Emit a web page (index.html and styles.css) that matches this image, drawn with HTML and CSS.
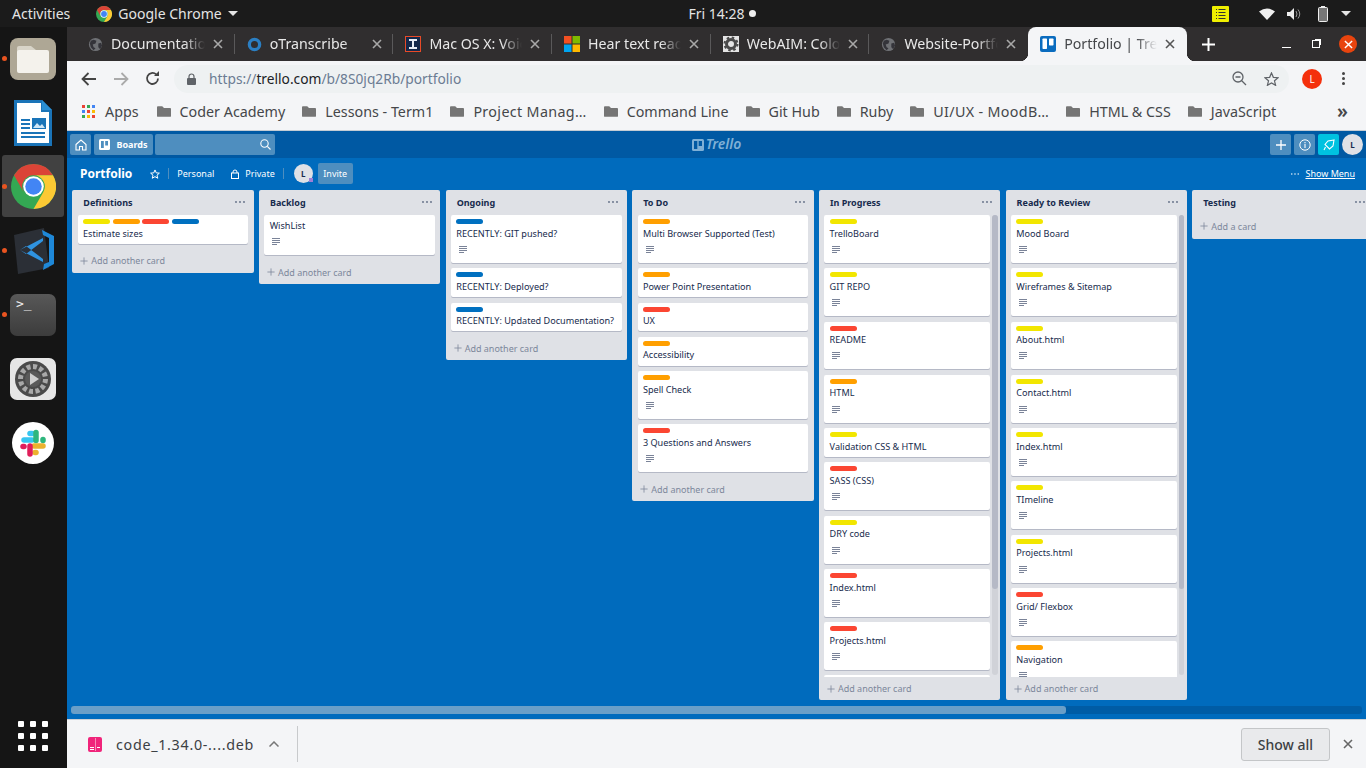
FILE: index.html
```html
<!DOCTYPE html>
<html lang="en">
<head>
  <meta charset="UTF-8" />
  <title>Portfolio | Trello</title>
  <link rel="stylesheet" href="styles.css">
</head>
<body>
  <svg class="sprites" width="0" height="0">
    <symbol id="globe" viewBox="0 0 16 16">
      <circle cx="8" cy="8" r="7" fill="#6f7175"/>
      <path d="M3 4l3-1 3 1-1 3-3 1 1 3 2 1-2 2-3-3-1-4zM11 7l3-1 1 3-2 4-2-2z" fill="#34343a"/>
    </symbol>
    <symbol id="x" viewBox="0 0 10 10">
      <path d="M1 1l8 8M9 1l-8 8" stroke="currentColor" stroke-width="1.6" fill="none"/>
    </symbol>
    <symbol id="folder" viewBox="0 0 16 14">
      <path d="M1 1h5l2 2h7a1 1 0 0 1 1 1v8a1 1 0 0 1-1 1H1a1 1 0 0 1-1-1V2a1 1 0 0 1 1-1z" fill="#757575"/>
    </symbol>
    <symbol id="desc" viewBox="0 0 8 7">
      <path d="M0 .5h8M0 2.500h8M0 4.500h8M0 6.500h5" stroke="#7a8398" stroke-width="1" fill="none"/>
    </symbol>
    <symbol id="dots" viewBox="0 0 10 2">
      <circle cx="1" cy="1" r=".9"/><circle cx="5" cy="1" r=".9"/><circle cx="9" cy="1" r=".9"/>
    </symbol>
    <symbol id="plus" viewBox="0 0 10 10">
      <path d="M5 .5v9M.5 5h9" stroke="currentColor" stroke-width="1" fill="none"/>
    </symbol>
    <symbol id="chrome" viewBox="0 0 48 48">
      <circle cx="24" cy="24" r="24" fill="#34a853"/>
      <path d="M24 0A24 24 0 0 1 44.800 12H24A12 12 0 0 0 13.600 30L3.200 12A24 24 0 0 1 24 0z" fill="#db4437"/>
      <path d="M44.800 12A24 24 0 0 1 24 48L34.400 30A12 12 0 0 0 24 12z" fill="#fcc934"/>
      <circle cx="24" cy="24" r="11" fill="#fff"/>
      <circle cx="24" cy="24" r="8.800" fill="#4285f4"/>
    </symbol>
  </svg>

  <header class="topbar">
    <div class="topbar-left">
      <span>Activities</span>
      <span class="app-menu">
        <svg class="app-chrome" width="16" height="16"><use href="#chrome"/></svg>
        Google Chrome
        <i class="caret"></i>
      </span>
    </div>
    <div class="clock">Fri 14:28 <i class="clock-dot"></i></div>
    <div class="tray">
      <svg class="tray-note" width="17" height="16" viewBox="0 0 17 16">
        <rect width="17" height="16" rx="1" fill="#f0f000"/>
        <path d="M4 3.500h1M6.500 3.500h7M4 6.500h1M6.500 6.500h7M4 9.500h1M6.500 9.500h7M4 12.500h1M6.500 12.500h7" stroke="#333" stroke-width="1"/>
      </svg>
      <svg class="tray-wifi" width="16" height="12" viewBox="0 0 16 12"><path d="M0 3.500Q8-2.500 16 3.500L8 12z" fill="#eee"/></svg>
      <svg class="tray-vol" width="15" height="12" viewBox="0 0 15 12">
        <path d="M0 4h3l4-4v12L3 8H0z" fill="#eee"/>
        <path d="M9 3q2 3 0 6M11 1.500q3.500 4.500 0 9" stroke="#999" fill="none"/>
      </svg>
      <svg class="tray-batt" width="10" height="16" viewBox="0 0 10 16">
        <path d="M3 0h4v1.500H3z" fill="#eee"/>
        <rect x=".5" y="1.500" width="9" height="14" rx="1" fill="#777" stroke="#eee"/>
      </svg>
      <i class="caret"></i>
    </div>
  </header>

  <div class="desktop">
    <nav class="dock">
      <div class="dock-item running">
        <svg width="46" height="42" viewBox="0 0 46 42">
          <rect width="46" height="42" rx="8" fill="#aea795"/>
          <path d="M7 10a2 2 0 0 1 2-2h12l5 4v6H7z" fill="#d8d4c8"/>
          <rect x="7" y="12" width="32" height="23" rx="2" fill="#f4f2ec"/>
        </svg>
      </div>
      <div class="dock-item">
        <svg width="40" height="50" viewBox="0 0 40 50">
          <path d="M1 2h28l10 10v36H1z" fill="#1a74b8"/>
          <path d="M4 5h24v9h8v31H4z" fill="#fff"/>
          <path d="M29 2l10 10H29z" fill="#2a8fd4"/>
          <path d="M8 22h9M8 26h9M8 30h9M8 35h24M8 39h24" stroke="#1a74b8" stroke-width="2"/>
          <rect x="19" y="20" width="14" height="11" fill="#1a74b8"/>
          <path d="M20 30l4-5 3 3 2-2 3 4z" fill="#cfe6f6"/>
        </svg>
      </div>
      <div class="dock-item running active">
        <svg width="45" height="45"><use href="#chrome"/></svg>
      </div>
      <div class="dock-item running">
        <svg width="42" height="46" viewBox="0 0 42 46">
          <path d="M2 7L32 0l5 40L6 46z" fill="#2b2f36"/>
          <path d="M30 2l12 6v28l-11 6 1-6 5-2V10l-6-3z" fill="#1e88d8"/>
          <path d="M31 10v3L14 26l-6-4zM31 34v-3L14 18l-6 4z" fill="#2f93e0"/>
        </svg>
      </div>
      <div class="dock-item running">
        <div class="term-icon">&gt;_</div>
      </div>
      <div class="dock-item">
        <svg width="46" height="42" viewBox="0 0 46 42">
          <rect width="46" height="42" rx="7" fill="#e6e6e6"/>
          <circle cx="23" cy="21" r="18" fill="#4a4a4a"/>
          <circle cx="23" cy="21" r="12.500" fill="none" stroke="#a8a8a8" stroke-width="5" stroke-dasharray="4 2.500"/>
          <circle cx="23" cy="21" r="8" fill="#5a5a5a"/>
          <path d="M20 15l9 6-9 6z" fill="#d0d0d0"/>
        </svg>
      </div>
      <div class="dock-item">
        <svg width="42" height="42" viewBox="0 0 42 42">
          <circle cx="21" cy="21" r="21" fill="#fff"/>
          <g stroke-width="5.500" stroke-linecap="round" fill="none">
            <path d="M12 18h8" stroke="#36c5f0"/><path d="M18 11.500h2" stroke="#36c5f0"/>
            <path d="M24 10.500v8" stroke="#2eb67d"/><path d="M31 17.500v1" stroke="#2eb67d"/>
            <path d="M22 24h9" stroke="#ecb22e"/><path d="M23 30.500h1" stroke="#ecb22e"/>
            <path d="M18 24v8" stroke="#e01e5a"/><path d="M11 24.500h1" stroke="#e01e5a"/>
          </g>
        </svg>
      </div>
      <div class="dock-apps">
        <i></i><i></i><i></i><i></i><i></i><i></i><i></i><i></i><i></i>
      </div>
    </nav>

    <main class="window">
      <div class="tabstrip">
        <div class="tab">
          <svg width="15" height="15"><use href="#globe"/></svg>
          <span class="tab-title">Documentation</span>
          <svg class="tab-x" width="10" height="10"><use href="#x"/></svg>
        </div>
        <div class="tab">
          <svg width="15" height="15" viewBox="0 0 16 16"><circle cx="8" cy="8" r="5.500" fill="none" stroke="#2b7fc3" stroke-width="3.500"/></svg>
          <span class="tab-title">oTranscribe</span>
          <svg class="tab-x" width="10" height="10"><use href="#x"/></svg>
        </div>
        <div class="tab">
          <svg width="16" height="16" viewBox="0 0 16 16">
            <rect x=".5" y=".5" width="15" height="15" fill="#13294b" stroke="#e84a27"/>
            <path d="M4 3h8v2h-3v6h3v2H4v-2h3V5H4z" fill="#e8eef5"/>
          </svg>
          <span class="tab-title">Mac OS X: Voice</span>
          <svg class="tab-x" width="10" height="10"><use href="#x"/></svg>
        </div>
        <div class="tab">
          <svg width="16" height="16" viewBox="0 0 16 16">
            <rect width="7.500" height="7.500" fill="#f25022"/><rect x="8.500" width="7.500" height="7.500" fill="#7fba00"/>
            <rect y="8.500" width="7.500" height="7.500" fill="#00a4ef"/><rect x="8.500" y="8.500" width="7.500" height="7.500" fill="#ffb900"/>
          </svg>
          <span class="tab-title">Hear text read</span>
          <svg class="tab-x" width="10" height="10"><use href="#x"/></svg>
        </div>
        <div class="tab">
          <svg width="16" height="16" viewBox="0 0 16 16">
            <rect width="16" height="16" fill="#e4e4e4"/>
            <circle cx="8" cy="8" r="4.500" fill="none" stroke="#4a4a4a" stroke-width="3"/>
            <circle cx="8" cy="8" r="6.500" fill="none" stroke="#4a4a4a" stroke-width="2" stroke-dasharray="2.500 2.600"/>
          </svg>
          <span class="tab-title">WebAIM: Color</span>
          <svg class="tab-x" width="10" height="10"><use href="#x"/></svg>
        </div>
        <div class="tab">
          <svg width="15" height="15"><use href="#globe"/></svg>
          <span class="tab-title">Website-Portfolio</span>
          <svg class="tab-x" width="10" height="10"><use href="#x"/></svg>
        </div>
        <div class="tab tab-active">
          <svg width="16" height="16" viewBox="0 0 16 16">
            <rect width="16" height="16" rx="2" fill="#0a6cbf"/>
            <rect x="2.500" y="2.500" width="4.500" height="10.500" rx=".7" fill="#fff"/>
            <rect x="9" y="2.500" width="4.500" height="7" rx=".7" fill="#fff"/>
          </svg>
          <span class="tab-title">Portfolio | Trello</span>
          <svg class="tab-x" width="10" height="10"><use href="#x"/></svg>
        </div>
        <svg class="new-tab" width="13" height="13" viewBox="0 0 13 13"><path d="M6.500 0v13M0 6.500h13" stroke="#fff" stroke-width="2"/></svg>
        <div class="win-controls">
          <i class="win-min"></i>
          <i class="win-max"></i>
          <span class="win-close"><svg width="9" height="9"><use href="#x"/></svg></span>
        </div>
      </div>

      <div class="toolbar">
        <svg width="16" height="14" viewBox="0 0 16 14"><path d="M15 7H2M7.500 1L1.500 7l6 6" stroke="#444" stroke-width="1.800" fill="none"/></svg>
        <svg width="16" height="14" viewBox="0 0 16 14"><path d="M1 7h13M8.500 1l6 6-6 6" stroke="#aaa" stroke-width="1.800" fill="none"/></svg>
        <svg width="15" height="15" viewBox="0 0 15 15"><path d="M13 7.500A5.500 5.500 0 1 1 11.200 3.400" stroke="#444" stroke-width="1.800" fill="none"/><path d="M9 5h5V0z" fill="#444"/></svg>
        <div class="omnibox">
          <svg width="9" height="12" viewBox="0 0 9 12"><path d="M2 5V3.500a2.500 2.500 0 0 1 5 0V5" stroke="#5f6368" stroke-width="1.200" fill="none"/><rect y="5" width="9" height="7" rx="1" fill="#5f6368"/></svg>
          <span class="url">https://<b>trello.com</b>/b/8S0jq2Rb/portfolio</span>
          <svg class="omni-zoom" width="15" height="15" viewBox="0 0 15 15"><circle cx="6" cy="6" r="5" fill="none" stroke="#5f6368" stroke-width="1.300"/><path d="M3.500 6h5M9.500 9.500L14 14" stroke="#5f6368" stroke-width="1.300"/></svg>
          <svg width="15" height="14" viewBox="0 0 16 15"><path d="M8 1l2 4.700 5 .4-3.800 3.300 1.200 4.900L8 11.700l-4.400 2.600 1.200-4.900L1 6.100l5-.4z" fill="none" stroke="#5f6368" stroke-width="1.300"/></svg>
        </div>
        <span class="profile">L</span>
        <span class="kebab"><i></i><i></i><i></i></span>
      </div>

      <div class="bookmarks">
        <span class="bm bm-apps">
          <span class="apps-grid">
            <i class="c-r"></i><i class="c-g"></i><i class="c-b"></i>
            <i class="c-b"></i><i class="c-r"></i><i class="c-y"></i>
            <i class="c-g"></i><i class="c-y"></i><i class="c-r"></i>
          </span>
          Apps
        </span>
        <span class="bm"><svg width="14" height="13"><use href="#folder"/></svg>Coder Academy</span>
        <span class="bm"><svg width="14" height="13"><use href="#folder"/></svg>Lessons - Term1</span>
        <span class="bm bm-long"><svg width="14" height="13"><use href="#folder"/></svg>Project Manag…</span>
        <span class="bm"><svg width="14" height="13"><use href="#folder"/></svg>Command Line</span>
        <span class="bm"><svg width="14" height="13"><use href="#folder"/></svg>Git Hub</span>
        <span class="bm"><svg width="14" height="13"><use href="#folder"/></svg>Ruby</span>
        <span class="bm bm-long"><svg width="14" height="13"><use href="#folder"/></svg>UI/UX - MoodB…</span>
        <span class="bm"><svg width="14" height="13"><use href="#folder"/></svg>HTML &amp; CSS</span>
        <span class="bm"><svg width="14" height="13"><use href="#folder"/></svg>JavaScript</span>
        <span class="bm-more">»</span>
      </div>

      <div class="trello">
        <div class="t-nav">
          <span class="t-btn t-home">
            <svg width="12" height="12" viewBox="0 0 12 12"><path d="M1 5.500L6 1l5 4.500V11H7.500V7.500h-3V11H1z" fill="none" stroke="#fff" stroke-width="1.100"/></svg>
          </span>
          <span class="t-btn t-boards">
            <svg width="11" height="11" viewBox="0 0 11 11"><rect width="11" height="11" rx="1.500" fill="#fff"/><rect x="2" y="2" width="2.800" height="7" fill="#4e8ebf"/><rect x="6.200" y="2" width="2.800" height="4.500" fill="#4e8ebf"/></svg>
            Boards
          </span>
          <span class="t-search">
            <svg width="11" height="11" viewBox="0 0 11 11"><circle cx="4.500" cy="4.500" r="3.700" fill="none" stroke="#fff" stroke-width="1.100"/><path d="M7.300 7.300L10.500 10.500" stroke="#fff" stroke-width="1.100"/></svg>
          </span>
          <span class="t-logo">
            <svg width="12" height="12" viewBox="0 0 12 12"><rect width="12" height="12" rx="1.500" fill="#7fb0d6"/><rect x="2" y="2" width="3.300" height="8" fill="#0059a3"/><rect x="6.700" y="2" width="3.300" height="5" fill="#0059a3"/></svg>
            <span class="t-logo-text">Trello</span>
          </span>
          <span class="t-btn t-sq">
            <svg width="12" height="12" viewBox="0 0 12 12"><path d="M6 1v10M1 6h10" stroke="#fff" stroke-width="1.300"/></svg>
          </span>
          <span class="t-btn t-sq">
            <svg width="12" height="12" viewBox="0 0 12 12"><circle cx="6" cy="6" r="5.200" fill="none" stroke="#fff" stroke-width="1"/><path d="M6 5v4M6 3v1.200" stroke="#fff" stroke-width="1.100"/></svg>
          </span>
          <span class="t-btn t-sq t-rocket">
            <svg width="12" height="12" viewBox="0 0 12 12"><path d="M11 1L5 2 2 5.500 6.500 10 10 7zM2.500 8L1 11" fill="none" stroke="#fff" stroke-width="1.100"/></svg>
          </span>
          <span class="t-avatar">L</span>
        </div>

        <div class="board-head">
          <span class="board-name">Portfolio</span>
          <svg class="board-star" width="10" height="10" viewBox="0 0 16 15"><path d="M8 1l2 4.700 5 .4-3.800 3.300 1.200 4.900L8 11.700l-4.400 2.600 1.200-4.900L1 6.100l5-.4z" fill="none" stroke="#fff" stroke-width="1.600"/></svg>
          <i class="board-sep"></i>
          <span class="board-link">Personal</span>
          <svg class="board-lock" width="8" height="10" viewBox="0 0 8 10"><path d="M2 4V3a2 2 0 0 1 4 0v1" stroke="#fff" fill="none"/><rect x=".5" y="4" width="7" height="5.500" fill="none" stroke="#fff"/></svg>
          <span class="board-link">Private</span>
          <i class="board-sep board-sep-r"></i>
          <span class="board-avatar">L</span>
          <span class="board-invite">Invite</span>
          <span class="board-menu">
            <svg width="8" height="2" fill="#fff"><use href="#dots"/></svg>
            <u>Show Menu</u>
          </span>
        </div>

        <div class="lists">
          <section class="list">
            <div class="list-head"><span>Definitions</span><svg width="10" height="2"><use href="#dots"/></svg></div>
            <div class="list-cards">
              <div class="card">
                <div class="labels"><i class="l-yellow"></i><i class="l-orange"></i><i class="l-red"></i><i class="l-blue"></i></div>
                <div class="card-text">Estimate sizes</div>
              </div>
            </div>
            <div class="list-add"><svg width="8" height="8"><use href="#plus"/></svg>Add another card</div>
          </section>

          <section class="list">
            <div class="list-head"><span>Backlog</span><svg width="10" height="2"><use href="#dots"/></svg></div>
            <div class="list-cards">
              <div class="card">
                <div class="card-text">WishList</div>
                <div class="card-badges"><svg width="8" height="7"><use href="#desc"/></svg></div>
              </div>
            </div>
            <div class="list-add"><svg width="8" height="8"><use href="#plus"/></svg>Add another card</div>
          </section>

          <section class="list">
            <div class="list-head"><span>Ongoing</span><svg width="10" height="2"><use href="#dots"/></svg></div>
            <div class="list-cards">
              <div class="card">
                <div class="labels"><i class="l-blue"></i></div>
                <div class="card-text">RECENTLY: GIT pushed?</div>
                <div class="card-badges"><svg width="8" height="7"><use href="#desc"/></svg></div>
              </div>
              <div class="card">
                <div class="labels"><i class="l-blue"></i></div>
                <div class="card-text">RECENTLY: Deployed?</div>
              </div>
              <div class="card">
                <div class="labels"><i class="l-blue"></i></div>
                <div class="card-text">RECENTLY: Updated Documentation?</div>
              </div>
            </div>
            <div class="list-add"><svg width="8" height="8"><use href="#plus"/></svg>Add another card</div>
          </section>

          <section class="list">
            <div class="list-head"><span>To Do</span><svg width="10" height="2"><use href="#dots"/></svg></div>
            <div class="list-cards">
              <div class="card">
                <div class="labels"><i class="l-orange"></i></div>
                <div class="card-text">Multi Browser Supported (Test)</div>
                <div class="card-badges"><svg width="8" height="7"><use href="#desc"/></svg></div>
              </div>
              <div class="card">
                <div class="labels"><i class="l-orange"></i></div>
                <div class="card-text">Power Point Presentation</div>
              </div>
              <div class="card">
                <div class="labels"><i class="l-red"></i></div>
                <div class="card-text">UX</div>
              </div>
              <div class="card">
                <div class="labels"><i class="l-orange"></i></div>
                <div class="card-text">Accessibility</div>
              </div>
              <div class="card">
                <div class="labels"><i class="l-orange"></i></div>
                <div class="card-text">Spell Check</div>
                <div class="card-badges"><svg width="8" height="7"><use href="#desc"/></svg></div>
              </div>
              <div class="card">
                <div class="labels"><i class="l-red"></i></div>
                <div class="card-text">3 Questions and Answers</div>
                <div class="card-badges"><svg width="8" height="7"><use href="#desc"/></svg></div>
              </div>
            </div>
            <div class="list-add"><svg width="8" height="8"><use href="#plus"/></svg>Add another card</div>
          </section>

          <section class="list list-scroll">
            <div class="list-head"><span>In Progress</span><svg width="10" height="2"><use href="#dots"/></svg></div>
            <div class="scroll-area">
              <div class="list-cards">
                <div class="card">
                  <div class="labels"><i class="l-yellow"></i></div>
                  <div class="card-text">TrelloBoard</div>
                  <div class="card-badges"><svg width="8" height="7"><use href="#desc"/></svg></div>
                </div>
                <div class="card">
                  <div class="labels"><i class="l-yellow"></i></div>
                  <div class="card-text">GIT REPO</div>
                  <div class="card-badges"><svg width="8" height="7"><use href="#desc"/></svg></div>
                </div>
                <div class="card">
                  <div class="labels"><i class="l-red"></i></div>
                  <div class="card-text">README</div>
                  <div class="card-badges"><svg width="8" height="7"><use href="#desc"/></svg></div>
                </div>
                <div class="card">
                  <div class="labels"><i class="l-orange"></i></div>
                  <div class="card-text">HTML</div>
                  <div class="card-badges"><svg width="8" height="7"><use href="#desc"/></svg></div>
                </div>
                <div class="card">
                  <div class="labels"><i class="l-yellow"></i></div>
                  <div class="card-text">Validation CSS &amp; HTML</div>
                </div>
                <div class="card">
                  <div class="labels"><i class="l-red"></i></div>
                  <div class="card-text">SASS (CSS)</div>
                  <div class="card-badges"><svg width="8" height="7"><use href="#desc"/></svg></div>
                </div>
                <div class="card">
                  <div class="labels"><i class="l-yellow"></i></div>
                  <div class="card-text">DRY code</div>
                  <div class="card-badges"><svg width="8" height="7"><use href="#desc"/></svg></div>
                </div>
                <div class="card">
                  <div class="labels"><i class="l-red"></i></div>
                  <div class="card-text">Index.html</div>
                  <div class="card-badges"><svg width="8" height="7"><use href="#desc"/></svg></div>
                </div>
                <div class="card">
                  <div class="labels"><i class="l-red"></i></div>
                  <div class="card-text">Projects.html</div>
                  <div class="card-badges"><svg width="8" height="7"><use href="#desc"/></svg></div>
                </div>
                <div class="card">
                  <div class="labels"><i class="l-red"></i></div>
                </div>
              </div>
              <div class="scrollbar"><i></i></div>
            </div>
            <div class="list-add"><svg width="8" height="8"><use href="#plus"/></svg>Add another card</div>
          </section>

          <section class="list list-scroll">
            <div class="list-head"><span>Ready to Review</span><svg width="10" height="2"><use href="#dots"/></svg></div>
            <div class="scroll-area">
              <div class="list-cards">
                <div class="card">
                  <div class="labels"><i class="l-yellow"></i></div>
                  <div class="card-text">Mood Board</div>
                  <div class="card-badges"><svg width="8" height="7"><use href="#desc"/></svg></div>
                </div>
                <div class="card">
                  <div class="labels"><i class="l-yellow"></i></div>
                  <div class="card-text">Wireframes &amp; Sitemap</div>
                  <div class="card-badges"><svg width="8" height="7"><use href="#desc"/></svg></div>
                </div>
                <div class="card">
                  <div class="labels"><i class="l-yellow"></i></div>
                  <div class="card-text">About.html</div>
                  <div class="card-badges"><svg width="8" height="7"><use href="#desc"/></svg></div>
                </div>
                <div class="card">
                  <div class="labels"><i class="l-yellow"></i></div>
                  <div class="card-text">Contact.html</div>
                  <div class="card-badges"><svg width="8" height="7"><use href="#desc"/></svg></div>
                </div>
                <div class="card">
                  <div class="labels"><i class="l-yellow"></i></div>
                  <div class="card-text">Index.html</div>
                  <div class="card-badges"><svg width="8" height="7"><use href="#desc"/></svg></div>
                </div>
                <div class="card">
                  <div class="labels"><i class="l-yellow"></i></div>
                  <div class="card-text">TImeline</div>
                  <div class="card-badges"><svg width="8" height="7"><use href="#desc"/></svg></div>
                </div>
                <div class="card">
                  <div class="labels"><i class="l-yellow"></i></div>
                  <div class="card-text">Projects.html</div>
                  <div class="card-badges"><svg width="8" height="7"><use href="#desc"/></svg></div>
                </div>
                <div class="card">
                  <div class="labels"><i class="l-red"></i></div>
                  <div class="card-text">Grid/ Flexbox</div>
                  <div class="card-badges"><svg width="8" height="7"><use href="#desc"/></svg></div>
                </div>
                <div class="card">
                  <div class="labels"><i class="l-orange"></i></div>
                  <div class="card-text">Navigation</div>
                  <div class="card-badges"><svg width="8" height="7"><use href="#desc"/></svg></div>
                </div>
              </div>
              <div class="scrollbar"><i></i></div>
            </div>
            <div class="list-add"><svg width="8" height="8"><use href="#plus"/></svg>Add another card</div>
          </section>

          <section class="list">
            <div class="list-head"><span>Testing</span><svg width="10" height="2"><use href="#dots"/></svg></div>
            <div class="list-add list-add-first"><svg width="8" height="8"><use href="#plus"/></svg>Add a card</div>
          </section>
        </div>

        <div class="board-scroll"><i></i></div>
      </div>

      <footer class="downloads">
        <svg width="14" height="15" viewBox="0 0 14 15">
          <rect width="14" height="15" rx="2" fill="#f0247a"/>
          <path d="M7.500 1v13" stroke="#f78db8"/>
          <path d="M2 10.500h4M2 12.500h4M9 10.500h3" stroke="#fff"/>
        </svg>
        <span class="dl-name">code_1.34.0-....deb</span>
        <svg class="dl-up" width="10" height="6" viewBox="0 0 10 6"><path d="M.5 5.500L5 1l4.500 4.500" stroke="#777" stroke-width="1.500" fill="none"/></svg>
        <i class="dl-sep"></i>
        <span class="dl-all">Show all</span>
        <svg class="dl-x" width="10" height="10"><use href="#x"/></svg>
      </footer>
    </main>
  </div>
</body>
</html>
```

FILE: styles.css
```css
* {
  margin: 0;
  padding: 0;
  box-sizing: border-box;
}

html, body {
  width: 1366px;
  height: 768px;
  overflow: hidden;
}

body {
  display: flex;
  flex-direction: column;
  font-family: "Noto Sans", "Open Sans", sans-serif;
  background: #151515;
}

i {
  display: block;
}

svg {
  display: block;
  flex: none;
}

.sprites {
  position: absolute;
}

/* ubuntu top bar */
.topbar {
  height: 27px;
  flex: none;
  display: grid;
  grid-template-columns: 1fr auto 1fr;
  align-items: center;
  padding: 0 12px;
  background: #1b1b1b;
  color: #e4e4e4;
  font-size: 14px;
}

.topbar-left {
  display: flex;
  align-items: center;
  gap: 26px;
}

.app-menu {
  display: flex;
  align-items: center;
  gap: 6px;
}

.caret {
  width: 0;
  height: 0;
  border: 5px solid transparent;
  border-top: 5px solid #e4e4e4;
  border-bottom: 0;
}

.clock {
  display: flex;
  align-items: center;
  gap: 4px;
  padding-left: 78px;
  font-size: 14px;
}

.clock-dot {
  width: 7px;
  height: 7px;
  border-radius: 50%;
  background: #eee;
}

.tray {
  display: flex;
  align-items: center;
  justify-content: flex-end;
  margin-right: 3px;
}

.tray-wifi { margin-left: 30px; }
.tray-vol { margin-left: 12px; }
.tray-batt { margin-left: 16px; }
.tray .caret { margin-left: 13px; }

.desktop {
  flex: 1;
  display: flex;
  min-height: 0;
}

/* launcher */
.dock {
  width: 67px;
  flex: none;
  display: flex;
  flex-direction: column;
  padding-right: 1px;
  background: #151515;
}

.dock-item {
  height: 64px;
  flex: none;
  display: flex;
  align-items: center;
  justify-content: center;
  position: relative;
}

.dock-item.running::before {
  content: "";
  position: absolute;
  left: 2px;
  top: 29px;
  width: 5px;
  height: 5px;
  border-radius: 50%;
  background: #e95420;
}

.dock-item.active {
  background: #414141;
  width: 62px;
  height: 62px;
  margin: 0 0 2px 2px;
  border-radius: 3px;
}

.dock-item.active::before {
  left: 0;
}

.term-icon {
  width: 46px;
  height: 42px;
  padding: 0 6px;
  border-radius: 7px;
  background: linear-gradient(#585858, #3c3c3c);
  color: #eee;
  font: 13px/20px "DejaVu Sans Mono", monospace;
}

.dock-apps {
  margin-top: auto;
  margin-bottom: 17px;
  align-self: center;
  display: grid;
  grid-template-columns: repeat(3, 6px);
  gap: 6px;
}

.dock-apps i {
  width: 6px;
  height: 6px;
  border-radius: 1px;
  background: #fff;
}

/* chrome window */
.window {
  flex: 1;
  min-width: 0;
  display: flex;
  flex-direction: column;
}

.tabstrip {
  height: 34px;
  flex: none;
  display: flex;
  align-items: center;
  padding-left: 9px;
  background: #302e2f;
}

.tab {
  width: 158.7px;
  height: 100%;
  flex: none;
  display: flex;
  align-items: center;
  gap: 8px;
  padding: 0 11.7px 0 12px;
  color: #e8e8e8;
  font-size: 14.2px;
  background: linear-gradient(#5a595a, #5a595a) right center / 1px 20px no-repeat;
}

.tab:nth-child(6) {
  background: none;
}

.tab-title {
  flex: 1;
  min-width: 0;
  margin-bottom: 2px;
  white-space: nowrap;
  overflow: hidden;
  mask-image: linear-gradient(to right, #000 78%, transparent);
}

.tab-x {
  color: #a8a8a8;
}

.tab-active {
  position: relative;
  background: #f4f5f7;
  color: #45474a;
  border-radius: 8px 8px 0 0;
}

.tab-active::before,
.tab-active::after {
  content: "";
  position: absolute;
  bottom: 0;
  width: 8px;
  height: 8px;
}

.tab-active::before {
  left: -8px;
  background: radial-gradient(circle at 0 0, transparent 8px, #f4f5f7 8.5px);
}

.tab-active::after {
  right: -8px;
  background: radial-gradient(circle at 100% 0, transparent 8px, #f4f5f7 8.5px);
}

.tab-active .tab-x {
  color: #555;
}

.new-tab {
  margin-left: 15px;
}

.win-controls {
  margin-left: auto;
  display: flex;
  align-items: center;
  padding-right: 9px;
}

.win-min {
  width: 9px;
  height: 1px;
  margin-top: 6px;
  background: #fff;
}

.win-max {
  width: 8px;
  height: 8px;
  margin-left: 21px;
  border: 1px solid #fff;
  box-shadow: 2px -2px 0 -1px #fff;
}

.win-close {
  width: 18px;
  height: 18px;
  margin-left: 19px;
  border-radius: 50%;
  background: #e8440e;
  color: #fff;
  display: flex;
  align-items: center;
  justify-content: center;
}

.toolbar {
  height: 33px;
  flex: none;
  display: flex;
  align-items: center;
  padding: 2px 0 0 14px;
  gap: 16px;
  background: #f4f5f7;
}

.omnibox {
  width: 1115px;
  height: 28px;
  margin-left: -2px;
  border-radius: 14px;
  background: #eef1f2;
  display: flex;
  align-items: center;
  padding: 0 10px 0 13px;
  gap: 12px;
}

.url {
  flex: 1;
  margin-left: 1px;
  font-size: 13.75px;
  color: #6b7c93;
  white-space: nowrap;
}

.url b {
  font-weight: 400;
  color: #202124;
}

.omni-zoom {
  margin-right: 5px;
}

.profile {
  width: 20px;
  height: 20px;
  margin-left: -3px;
  border-radius: 50%;
  background: #f4300c;
  color: #fff;
  font-size: 10px;
  line-height: 20px;
  text-align: center;
}

.kebab {
  display: flex;
  flex-direction: column;
  gap: 2px;
  margin-left: 4px;
}

.kebab i {
  width: 3px;
  height: 3px;
  border-radius: 50%;
  background: #444;
}

.bookmarks {
  height: 36px;
  flex: none;
  display: flex;
  align-items: center;
  padding: 0 0 2px 15px;
  background: #f4f5f7;
  color: #45474a;
  font-size: 14.3px;
  white-space: nowrap;
}

.bm {
  display: flex;
  align-items: center;
  gap: 9px;
  margin-right: 17px;
}

.bm-apps {
  gap: 10px;
  margin-right: 18px;
}

.bm-long {
  letter-spacing: .35px;
}

.apps-grid {
  display: grid;
  grid-template-columns: repeat(3, 3px);
  gap: 2px;
}

.apps-grid i {
  width: 3px;
  height: 3px;
}

.c-r { background: #ea4335; }
.c-g { background: #34a853; }
.c-b { background: #4285f4; }
.c-y { background: #fbbc05; }

.bm-more {
  margin-left: auto;
  margin-right: 18px;
  font-size: 19px;
  font-weight: 600;
  line-height: 20px;
}

/* trello */
.trello {
  flex: 1;
  min-height: 0;
  display: flex;
  flex-direction: column;
  background: #006bbd;
  border-top: 1px solid #c4ccd4;
  overflow: hidden;
}

.t-nav {
  height: 27px;
  flex: none;
  display: flex;
  align-items: center;
  gap: 3px;
  padding: 0 3px;
  background: #0059a3;
}

.t-btn {
  height: 21px;
  display: flex;
  align-items: center;
  justify-content: center;
  background: #4e8ebf;
  border-radius: 2px;
  color: #fff;
}

.t-home { width: 21px; }

.t-boards {
  width: 59px;
  gap: 6px;
  font-size: 9px;
  font-weight: 700;
}

.t-search {
  width: 120px;
  height: 21px;
  margin-left: -1px;
  padding-right: 4px;
  border-radius: 2px;
  background: #4e8ebf;
  display: flex;
  align-items: center;
  justify-content: flex-end;
}

.t-logo {
  flex: 1;
  display: flex;
  align-items: center;
  justify-content: center;
  gap: 2px;
  padding-right: 112px;
  color: #7fb0d6;
  font-size: 14px;
  font-weight: 600;
  font-style: italic;
}

.t-logo-text {
  margin-bottom: 2px;
}

.t-sq { width: 21px; }
.t-rocket { background: #00c2e0; }

.t-avatar {
  width: 21px;
  height: 21px;
  border-radius: 50%;
  background: #dfe1e6;
  color: #172b4d;
  font-size: 8px;
  font-weight: 700;
  line-height: 21px;
  text-align: center;
}

.board-head {
  height: 32px;
  flex: none;
  display: flex;
  align-items: center;
  padding: 0 11px 1px 13px;
  color: #fff;
  font-size: 9px;
}

.board-name {
  font-size: 12px;
  font-weight: 700;
}

.board-star { margin-left: 18px; }

.board-sep {
  width: 1px;
  height: 11px;
  margin-left: 8px;
  background: #4e8ebf;
}

.board-link { margin-left: 8px; }
.board-lock { margin-left: 17px; }
.board-lock + .board-link { margin-left: 6px; }
.board-sep-r { margin-left: 8px; }

.board-avatar {
  position: relative;
  width: 19px;
  height: 19px;
  margin-left: 10px;
  border-radius: 50%;
  background: #dfe1e6;
  color: #172b4d;
  font-size: 8px;
  font-weight: 700;
  line-height: 19px;
  text-align: center;
}

.board-avatar::after {
  content: "";
  position: absolute;
  right: 0;
  bottom: 1px;
  width: 4px;
  height: 4px;
  background: #9f7fd6;
}

.board-invite {
  width: 35px;
  height: 21px;
  margin-left: 5px;
  border-radius: 2px;
  background: #4e8ebf;
  line-height: 21px;
  text-align: center;
}

.board-menu {
  margin-left: auto;
  display: flex;
  align-items: center;
  gap: 6px;
}

.lists {
  flex: 1;
  min-height: 0;
  display: flex;
  align-items: flex-start;
  gap: 5.33px;
  padding-left: 5.33px;
}

.list {
  width: 181.33px;
  flex: none;
  border-radius: 2px;
  background: #dfe1e6;
  color: #172b4d;
  display: flex;
  flex-direction: column;
}

.list-head {
  height: 24.95px;
  flex: none;
  display: flex;
  align-items: center;
  justify-content: space-between;
  padding: 0 8.5px 0 11px;
  font-size: 9px;
  font-weight: 700;
  fill: #5e6c84;
}

.list-cards {
  padding: 0 5.33px;
}

.card {
  margin-bottom: 5.3px;
  padding: 4px 5.33px;
  border-radius: 2px;
  background: #fff;
  box-shadow: 0 1px 0 #b5b9c6;
}

.labels {
  display: flex;
  gap: 2.67px;
  margin-bottom: 2.67px;
}

.labels i {
  width: 27px;
  height: 5px;
  border-radius: 3px;
}

.l-yellow { background: #f2e600; }
.l-orange { background: #ff9f00; }
.l-red { background: #fb4632; }
.l-blue { background: #0070c0; }

.card-text {
  font-size: 9.1px;
  line-height: 13.33px;
  white-space: nowrap;
}

.card-badges {
  height: 19px;
  display: flex;
  align-items: center;
  padding-left: 2.67px;
}

.list-add {
  height: 23.4px;
  flex: none;
  display: flex;
  align-items: center;
  gap: 3px;
  padding-left: 8px;
  font-size: 9px;
  color: #7c879b;
}

.list-add-first {
  height: 24px;
  padding-bottom: 1px;
}

/* long lists scroll inside */
.scroll-area {
  height: 462px;
  display: flex;
  overflow: hidden;
}

.list-scroll .list-cards {
  width: 173.5px;
  flex: none;
  padding-right: 2px;
}

.list-scroll .scrollbar {
  width: 5.33px;
  flex: none;
  height: 460px;
  border-radius: 3px;
  background: #d0d2d8;
}

.scrollbar i {
  height: 374px;
  border-radius: 3px;
  background: #b5b9c6;
}

.board-scroll {
  height: 8px;
  flex: none;
  margin: 0 4px 5px;
  border-radius: 3px;
  background: #005ca5;
}

.board-scroll i {
  width: 995px;
  height: 8px;
  border-radius: 3px;
  background: #6a9fc8;
}

/* download shelf */
.downloads {
  height: 49px;
  flex: none;
  display: flex;
  align-items: center;
  padding: 0 13px 0 21px;
  background: #f4f5f7;
  border-top: 1px solid #cfd2d6;
  color: #3c4043;
}

.dl-name {
  margin-left: 14px;
  font-size: 14.3px;
  letter-spacing: .7px;
}

.dl-up { margin-left: 15px; }

.dl-sep {
  width: 1px;
  height: 36px;
  margin-left: 18px;
  background: #c8cacc;
}

.dl-all {
  margin-left: auto;
  width: 89px;
  height: 33px;
  border: 1px solid #c4c6c8;
  border-radius: 3px;
  background: #e9eaec;
  font-size: 14px;
  font-weight: 500;
  line-height: 31px;
  text-align: center;
}

.dl-x {
  margin-left: 13px;
  color: #666;
}
```
